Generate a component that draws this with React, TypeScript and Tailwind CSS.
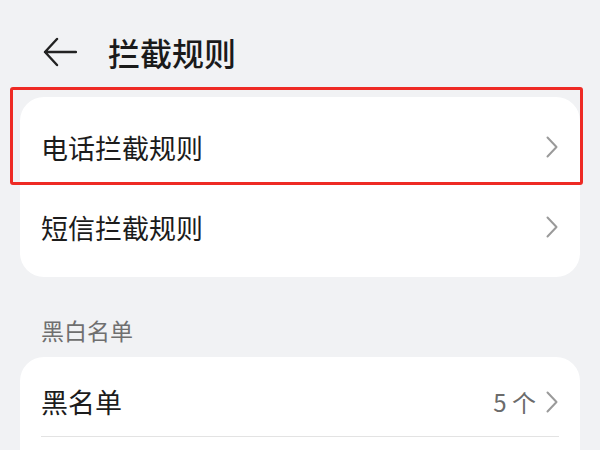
import React from 'react'

const FONT = { fontFamily: '"Noto Sans CJK SC", "Noto Sans", sans-serif' }

// chevron on the right of each row
function Chevron() {
  return (
    <svg width="14" height="22" viewBox="0 0 14 22" fill="none" className="shrink-0">
      <path d="M2.5 1.5 L11.5 11 L2.5 20.5" stroke="#9a9a9a" strokeWidth="2" strokeLinecap="round" strokeLinejoin="round" />
    </svg>
  )
}

function Row({ title, value, divider }: { title: string; value?: string; divider?: boolean }) {
  return (
    <div className="px-[21px]">
      <div className={`flex items-center justify-between ${divider ? 'h-[70px] border-b border-[#e3e3e3]' : 'h-[80px]'}`}>
        <span className="text-[27px] leading-none text-[#1c1c1c]">{title}</span>
        <div className="flex items-center gap-[9px]">
          {value && <span className="text-[24px] leading-none text-[#6b6b6b]">{value}</span>}
          <Chevron />
        </div>
      </div>
    </div>
  )
}

export default function App() {
  return (
    <div className="relative w-[600px] h-[450px] overflow-hidden bg-[#f1f2f4]" style={FONT}>
      {/* header */}
      <div className="flex items-center h-[97px] pt-[6px] pl-[43px]">
        <svg width="34" height="30" viewBox="0 0 34 30" fill="none">
          <path d="M14 2 L2 15 L14 28 M2 15 H33" stroke="#222" strokeWidth="2.4" strokeLinecap="round" strokeLinejoin="round" />
        </svg>
        <h1 className="ml-[31px] text-[32px] leading-none font-medium text-[#1a1a1a]">拦截规则</h1>
      </div>

      {/* rules card */}
      <div className="mx-[20px] rounded-[24px] bg-white py-[10px]">
        <Row title="电话拦截规则" />
        <Row title="短信拦截规则" />
      </div>

      {/* section label */}
      <div className="flex items-end h-[80px] pb-[14px] pl-[41px]">
        <span className="text-[23px] leading-[26px] text-[#6f6f6f]">黑白名单</span>
      </div>

      {/* list card */}
      <div className="mx-[20px] rounded-[24px] bg-white pt-[10px] pb-[10px]">
        <Row title="黑名单" value="5 个" divider />
        <Row title="白名单" />
      </div>

      {/* highlight box */}
      <div className="absolute left-[10px] top-[87px] w-[573px] h-[98px] border-[3px] border-[#ee2a24] rounded-[3px]" />
    </div>
  )
}
